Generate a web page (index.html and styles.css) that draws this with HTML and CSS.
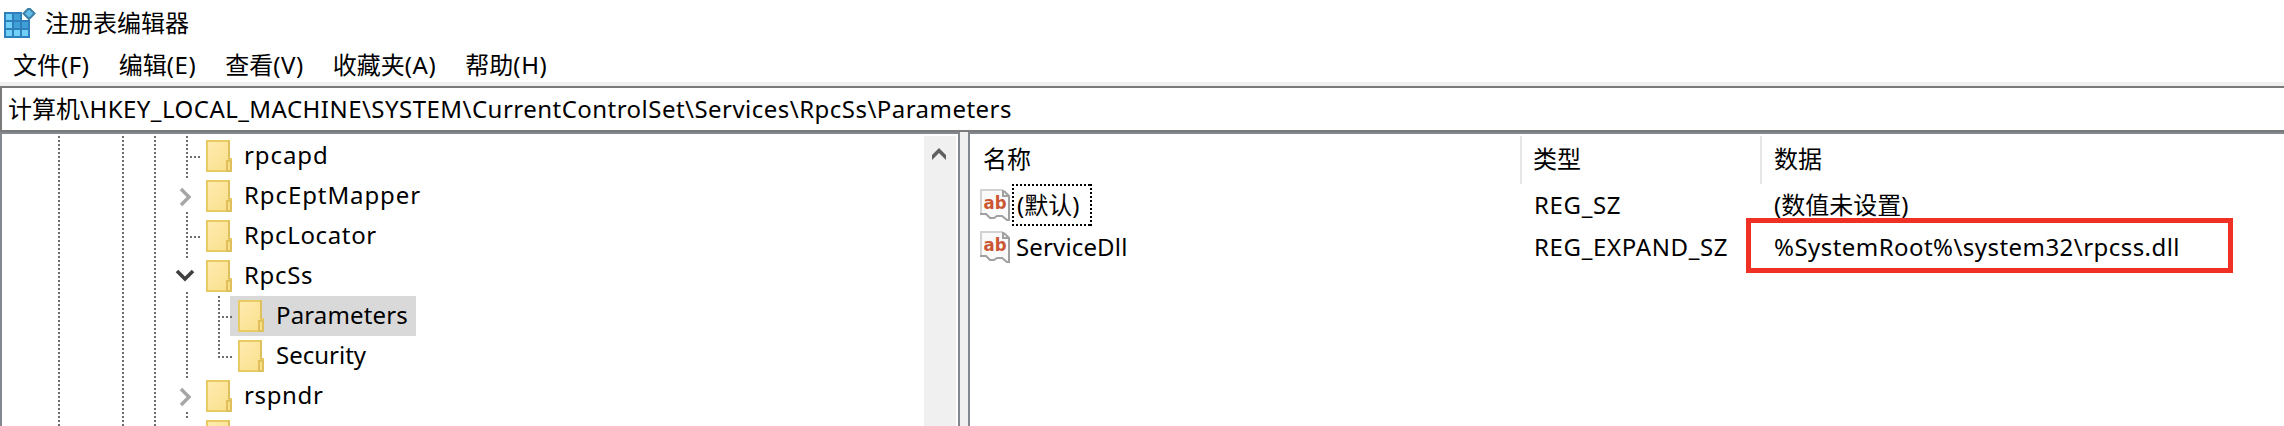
FILE: index.html
```
<!DOCTYPE html>
<html lang="zh-CN">
<head>
<meta charset="utf-8">
<title>注册表编辑器</title>
<link rel="stylesheet" href="styles.css">
</head>
<body>
<svg class="defs" width="0" height="0">
  <defs>
    <linearGradient id="paper" x1="0" y1="0" x2="1" y2="1"><stop offset="0" stop-color="#ffebb0"/><stop offset="1" stop-color="#f9df8a"/></linearGradient>
    <symbol id="folder" viewBox="0 0 26 32">
      <path d="M1 1H23V19H25V31H1Z" fill="url(#paper)" stroke="#e8cb62" stroke-width="2"/>
      <path d="M23 1V19M21 31V21H25V31Z" fill="#f9df8a" stroke="#dfc05c" stroke-width="2"/>
    </symbol>
    <symbol id="string" viewBox="0 0 32 32">
      <path d="M1 1H23L29 7V31H25L21 27H17L14 29H10L6 25H1Z" fill="#fafafa"/>
      <path d="M1 25V1H23" fill="none" stroke="#d2d2d2" stroke-width="2"/>
      <path d="M23 1V7H29M24 2L29 7V31H27L22 27H17L14 29H10L6 25H0" fill="none" stroke="#a0a0a0" stroke-width="2"/>
      <text x="3.5" y="20" class="ab" textLength="23" lengthAdjust="spacingAndGlyphs">ab</text>
    </symbol>
    <symbol id="right" viewBox="0 0 14 20"><path d="M2 2L10 10L2 18" fill="none" stroke="#a6a6a6" stroke-width="3.4"/></symbol>
    <symbol id="down" viewBox="0 0 20 14"><path d="M2 2L10 10L18 2" fill="none" stroke="#404040" stroke-width="3.6"/></symbol>
  </defs>
</svg>
<div class="window">
  <header class="title">
    <svg width="32" height="32" viewBox="0 0 32 32">
      <path d="M0 4H18V12H26V30H0Z" fill="#2f7fbd"/>
      <path d="M2 6H8V12H2ZM2 14H8V20H2ZM2 22H8V28H2ZM10 22H16V28H10ZM18 22H24V28H18Z" fill="#70d0f8"/>
      <path d="M10 6H16V12H10ZM10 14H16V20H10ZM18 14H24V20H18Z" fill="#409fd5"/>
      <path d="M25 0L30.5 5.5L25 11L19.500 5.500Z" fill="#62bce8" stroke="#3b7fa8" stroke-width="2"/>
    </svg>
    <span>注册表编辑器</span>
  </header>
  <nav class="menu"><span>文件<i>(F)</i></span><span>编辑<i>(E)</i></span><span>查看<i>(V)</i></span><span>收藏夹<i>(A)</i></span><span>帮助<i>(H)</i></span></nav>
  <div class="address"><span>计算机<i class="path">\HKEY_LOCAL_MACHINE\SYSTEM\CurrentControlSet\Services\RpcSs\Parameters</i></span></div>
  <main class="panes">
    <section class="tree">
      <div class="rows">
        <div class="row"><b class="v"></b><b></b><b class="v"></b><b class="v"></b><b class="v h"></b><svg class="folder"><use href="#folder"/></svg><span class="wide">rpcapd</span></div>
        <div class="row"><b class="v"></b><b></b><b class="v"></b><b class="v"></b><b class="v c"><svg width="14" height="20"><use href="#right"/></svg></b><svg class="folder"><use href="#folder"/></svg><span class="wide">RpcEptMapper</span></div>
        <div class="row"><b class="v"></b><b></b><b class="v"></b><b class="v"></b><b class="v h"></b><svg class="folder"><use href="#folder"/></svg><span class="mid">RpcLocator</span></div>
        <div class="row"><b class="v"></b><b></b><b class="v"></b><b class="v"></b><b class="v c open"><svg width="20" height="14"><use href="#down"/></svg></b><svg class="folder"><use href="#folder"/></svg><span class="mid">RpcSs</span></div>
        <div class="row"><b class="v"></b><b></b><b class="v"></b><b class="v"></b><b class="v"></b><b class="v h sel"></b><div class="picked"><svg class="folder"><use href="#folder"/></svg><span class="slim">Parameters</span></div></div>
        <div class="row"><b class="v"></b><b></b><b class="v"></b><b class="v"></b><b class="v"></b><b class="v h last"></b><svg class="folder"><use href="#folder"/></svg><span>Security</span></div>
        <div class="row"><b class="v"></b><b></b><b class="v"></b><b class="v"></b><b class="v c"><svg width="14" height="20"><use href="#right"/></svg></b><svg class="folder"><use href="#folder"/></svg><span class="mid">rspndr</span></div>
        <div class="row"><b class="v"></b><b></b><b class="v"></b><b class="v"></b><b class="v c"></b><svg class="folder"><use href="#folder"/></svg></div>
      </div>
      <div class="scroll"><svg width="14" height="12" viewBox="0 0 14 12"><path d="M0 7L7 0L14 7V12L7 5L0 12Z" fill="#606060"/></svg></div>
    </section>
    <section class="list">
      <div class="line head"><div class="name">名称</div><div class="type">类型</div><div class="data">数据</div></div>
      <div class="line"><div class="name"><svg width="32" height="32"><use href="#string"/></svg><span class="focus">(默认)</span></div><div class="type"><span class="mid">REG_SZ</span></div><div class="data"><span>(数值未设置)</span></div></div>
      <div class="line"><div class="name"><svg width="32" height="32"><use href="#string"/></svg><span class="plain slim">ServiceDll</span></div><div class="type"><span class="mid">REG_EXPAND_SZ</span></div><div class="data"><span class="value">%SystemRoot%\system32\rpcss.dll</span></div></div>
      <div class="mark"></div>
    </section>
  </main>
</div>
</body>
</html>
```
FILE: styles.css
```
* { box-sizing: border-box; }
body { margin: 0; background: #fff; color: #000; font: 24px/32px "Noto Sans", "Noto Sans CJK SC", sans-serif; }
i { font-style: normal; }
b { font-weight: 400; }
.defs { position: absolute; }
.window { width: 2284px; height: 426px; overflow: hidden; display: flex; flex-direction: column; }
.title { height: 44px; padding: 8px 0 0 4px; display: flex; gap: 9px; }
.title span { line-height: 30px; }
.menu { height: 38px; padding: 5px 0 0 13px; display: flex; gap: 29px; }
.menu i { letter-spacing: .6px; }
.address { height: 46px; flex: none; margin-top: 4px; padding: 5px 0 0 6px; border: 2px solid #7a7a7a; border-right: 0; box-shadow: 0 -4px #f0f0f0; white-space: nowrap; }
.path { letter-spacing: .47px; }
.wide { letter-spacing: .9px; }
.mid { letter-spacing: .65px; }
.slim { letter-spacing: .15px; }
.value { letter-spacing: .45px; }
.panes { flex: 1; display: flex; background: #f0f0f0; min-height: 0; }
.tree { width: 960px; border: 2px solid #828790; border-bottom: 0; background: #fff; display: flex; justify-content: space-between; padding: 2px 2px 0 40px; }
.row { display: flex; height: 40px; align-items: center; }
.row span { padding-bottom: 2px; }
.row > b { width: 32px; height: 40px; position: relative; flex: none; }
.v { background: repeating-linear-gradient(#6d6d6d 0 2px, transparent 2px 4px) 16px 0 / 2px 40px no-repeat; }
.h::after { content: ""; position: absolute; left: 20px; top: 20px; width: 10px; height: 2px; background: repeating-linear-gradient(90deg, #6d6d6d 0 2px, transparent 2px 4px); }
.last { background-size: 2px 22px; }
.c { background: linear-gradient(#6d6d6d, #6d6d6d) 16px 0 / 2px 2px no-repeat, linear-gradient(#6d6d6d, #6d6d6d) 16px 36px / 2px 2px no-repeat; }
.c svg { display: block; margin: 11px 0 0 9px; }
.c.open svg { margin: 13px 0 0 5px; }
.folder { width: 26px; height: 32px; margin: 0 12px 0 4px; flex: none; }
.sel { z-index: 1; }
.picked { display: flex; align-items: center; height: 40px; margin-left: -4px; padding-left: 4px; width: 186px; background: #d9d9d9; }
.scroll { width: 32px; background: #f0f0f0; padding: 12px 0 0 8px; }
.scroll svg { display: block; }
.list { flex: 1; margin-left: 8px; border: 2px solid #828790; border-width: 2px 0 0 2px; background: #fff; padding-top: 2px; position: relative; }
.line { display: flex; height: 42px; }
.head { height: 48px; }
.line > div { display: flex; align-items: center; }
.name { width: 552px; padding-left: 10px; }
.head > div { padding-bottom: 3px; }
.head .name { padding-left: 13px; width: 550px; }
.type { width: 238px; padding-left: 12px; }
.head .type { width: 240px; padding-left: 11px; border-left: 2px solid #e5e5e5; }
.data { padding-left: 14px; }
.head .data { border-left: 2px solid #e5e5e5; padding-left: 12px; }
/* extends the separators down to the header's full height */
.head .type, .head .data { height: 48px; }
.focus { height: 42px; width: 80px; line-height: 42px; padding-left: 5px; background: repeating-linear-gradient(90deg, #000 0 2px, transparent 2px 4px) 0 0 / 100% 2px no-repeat, repeating-linear-gradient(90deg, #000 0 2px, transparent 2px 4px) 0 100% / 100% 2px no-repeat, repeating-linear-gradient(#000 0 2px, transparent 2px 4px) 0 0 / 2px 100% no-repeat, repeating-linear-gradient(#000 0 2px, transparent 2px 4px) 100% 0 / 2px 100% no-repeat; }
.plain { margin-left: 4px; }
.ab { font: 700 17px "DejaVu Sans", sans-serif; fill: #ca5634; }
.mark { position: absolute; left: 776px; top: 84px; width: 487px; height: 55px; border: 5px solid #ee3124; }
```
